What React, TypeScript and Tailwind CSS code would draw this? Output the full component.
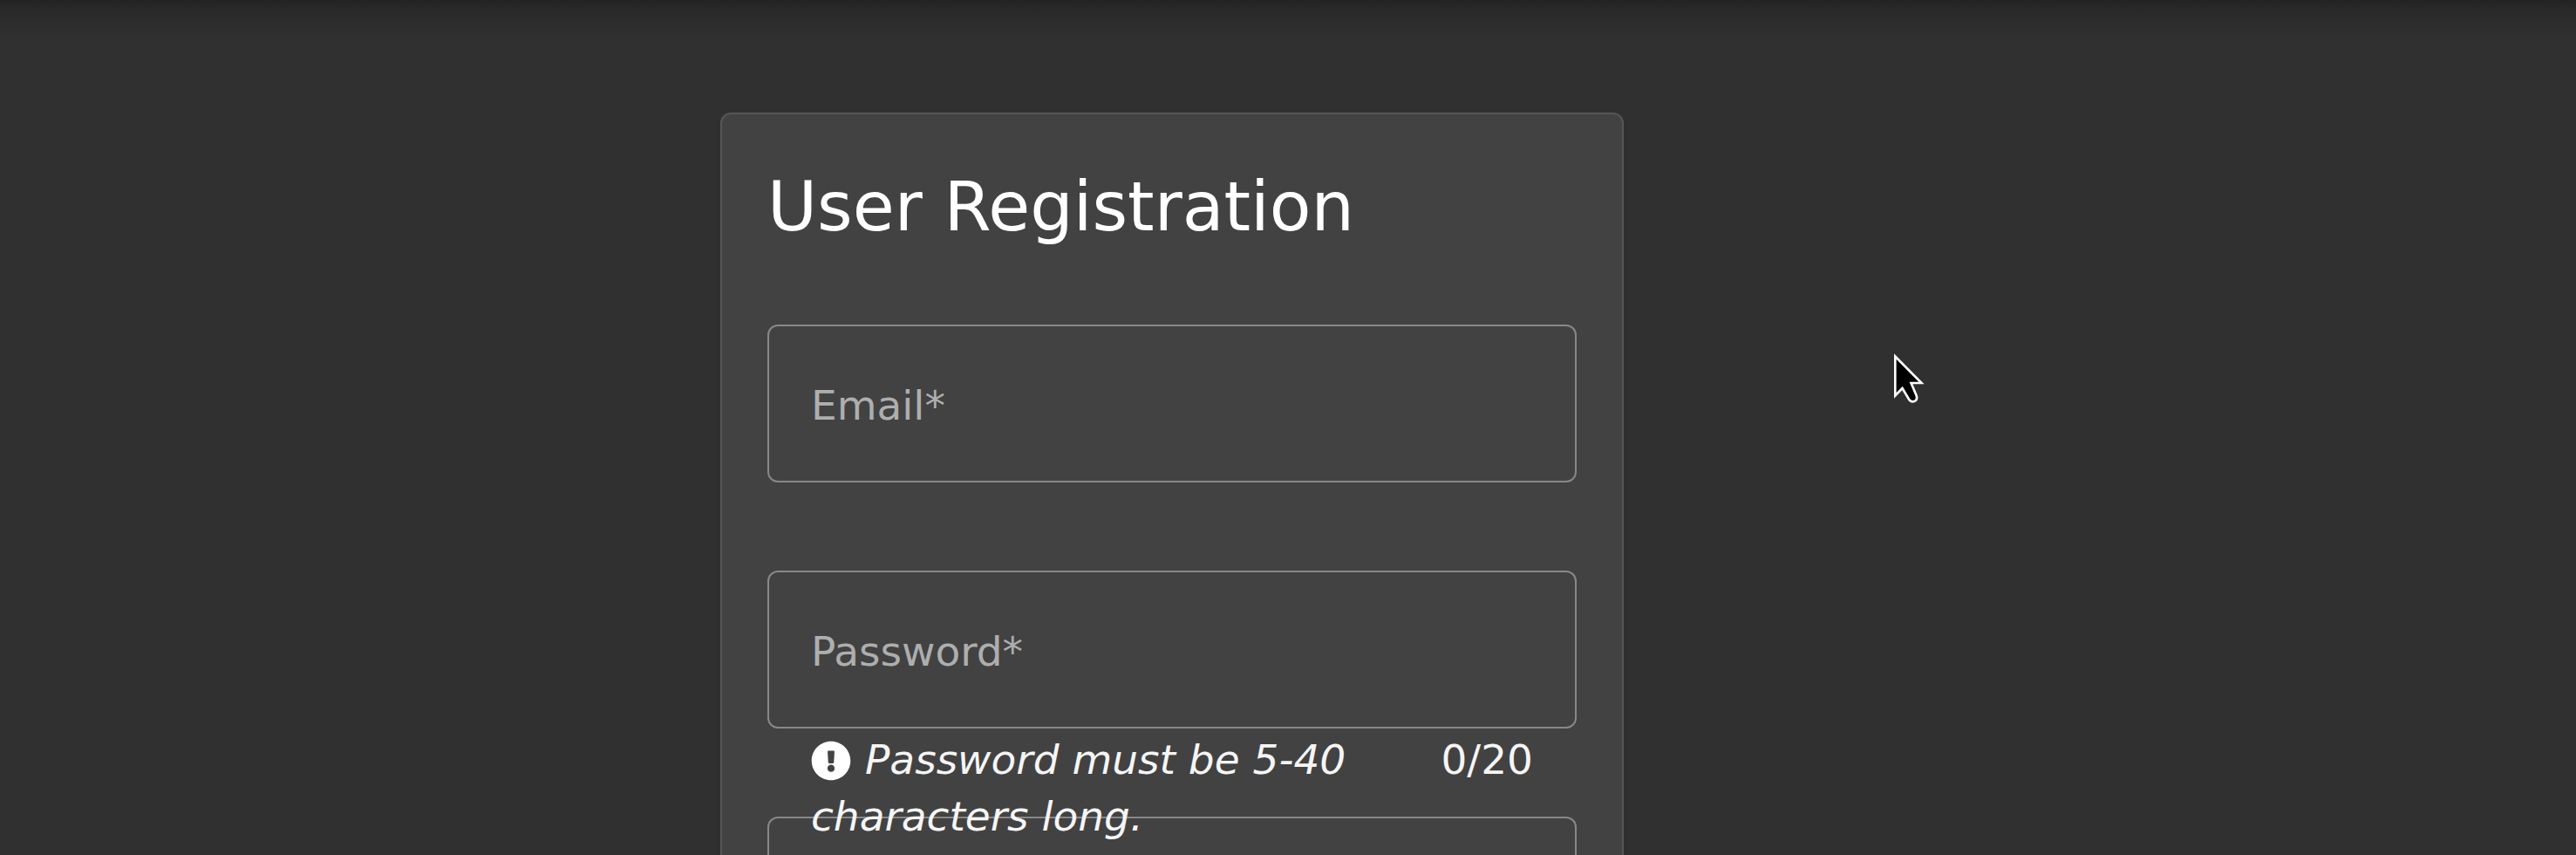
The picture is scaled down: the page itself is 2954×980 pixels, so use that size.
import type { ReactNode } from "react";
import { FaExclamationCircle } from "react-icons/fa";

type FieldProps = {
  id: string;
  type: string;
  label?: string;
  name?: string;
  children?: ReactNode;
};

function Field({ id, type, label, name, children }: FieldProps) {
  return (
    <div className="flex flex-col">
      <div className="grid h-[181px] rounded-[12px] border-2 border-[#888888]">
        <input
          id={id}
          type={type}
          maxLength={type === "password" ? 20 : undefined}
          aria-label={name}
          aria-describedby={children ? `${id}-hint` : undefined}
          className="peer col-start-1 row-start-1 w-full min-w-0 rounded-[10px] bg-transparent px-12 text-[47px] text-white outline-none"
        />
        {label && (
          <label
            htmlFor={id}
            className="pointer-events-none col-start-1 row-start-1 self-center px-12 pt-1 text-[47px] leading-[56px] text-[#aeaeae] peer-focus:opacity-0"
          >
            {label}
          </label>
        )}
      </div>
      <div className="z-10 h-[101px] px-[50px] pt-[3px] text-[47px] leading-[65px] text-[#f5f5f5]">
        {children}
      </div>
    </div>
  );
}

function Cursor() {
  return (
    <svg
      viewBox="0 0 38 62"
      className="pointer-events-none absolute left-[73.46%] top-[404px] h-[62px] w-[38px]"
      aria-hidden="true"
    >
      <path
        d="M3.3 4.5 L3.3 49.5 L11.5 41 L19.5 54.5 Q23 58 27 55 Q29 52.5 27.5 49 L21.5 35 L33.5 35 Z"
        fill="#000"
        stroke="#fff"
        strokeWidth="2.6"
        strokeLinejoin="miter"
      />
    </svg>
  );
}

export default function App() {
  return (
    <main className="relative h-screen overflow-hidden bg-[#303030] bg-[linear-gradient(to_bottom,#222222_0px,#282828_10px,#2d2d2d_25px,#303030_44px)] font-['DejaVu_Sans',sans-serif]">
      <div className="grid grid-cols-[826fr_1036fr_1092fr] pt-[129px]">
        <form className="col-start-2 flex flex-col rounded-[12px] border-2 border-[#565656] bg-[#424242] px-[52px] pt-[58px]">
          <h1 className="mb-[87px] whitespace-nowrap text-[78px] leading-[96px] text-white">
            User Registration
          </h1>
          <Field id="email" type="email" label="Email*" />
          <Field id="password" type="password" label="Password*">
            <div className="flex items-start justify-between gap-6">
              <em id="password-hint" className="min-w-0">
                <FaExclamationCircle className="mr-4 inline size-[46px] align-[-8px] text-white" />
                Password must be 5-40 characters long.
              </em>
              <span>0/20</span>
            </div>
          </Field>
          <Field id="confirm" type="password" name="Confirm password" />
        </form>
      </div>
      <Cursor />
    </main>
  );
}
